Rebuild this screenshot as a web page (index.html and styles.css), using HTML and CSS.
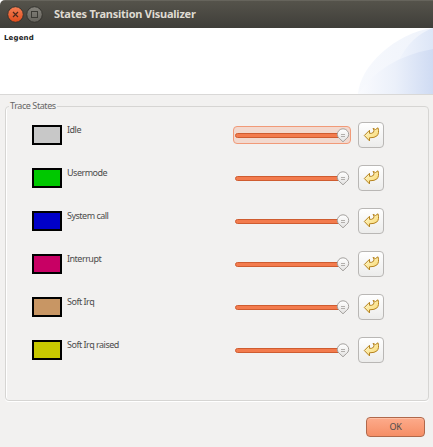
FILE: index.html
```html
<!DOCTYPE html>
<html lang="en">
<head>
<meta charset="utf-8">
<title>States Transition Visualizer</title>
<link rel="stylesheet" href="styles.css">
</head>
<body>
<svg width="0" height="0" class="defs" aria-hidden="true">
  <defs>
    <linearGradient id="gold" x1="0" y1="0" x2="1" y2="1"><stop offset="0" stop-color="#fffbd5"/><stop offset="1" stop-color="#f8d568"/></linearGradient>
    <linearGradient id="knob" x1="0" y1="0" x2="0" y2="1"><stop offset="0" stop-color="#fff"/><stop offset="1" stop-color="#e3e2e1"/></linearGradient>
    <symbol id="reset" viewBox="0 0 16 16"><path d="M1.3 8.5 6.5 3.3V6.3H8.5Q11.3 5.8 11 3.2L10 1.4 12.5 2.5 15 .8Q16.6 6.2 13.8 9Q11.8 10.8 6.5 10.8V13.9Z" fill="url(#gold)" stroke="#b58320" stroke-width="1"/></symbol>
    <symbol id="thumb" viewBox="0 0 14 15"><path d="M7 .8A5.7 5.7 0 0 1 12.7 6.5Q12.7 9.2 10.2 10.8L7 13.8 3.8 10.8Q1.3 9.2 1.3 6.5A5.7 5.7 0 0 1 7 .8Z" fill="url(#knob)" stroke="#a3a09d"/><path d="M5 6.5H9M5 8.5H9" stroke="#b2afac"/></symbol>
  </defs>
</svg>
<div class="window">
  <header class="titlebar">
    <svg class="controls" width="40" height="20" viewBox="0 0 40 20">
      <defs>
        <linearGradient id="close" x1="0" y1="0" x2="0" y2="1"><stop offset="0" stop-color="#f58055"/><stop offset="1" stop-color="#df4b1b"/></linearGradient>
        <linearGradient id="max" x1="0" y1="0" x2="0" y2="1"><stop offset="0" stop-color="#85837c"/><stop offset="1" stop-color="#64625c"/></linearGradient>
      </defs>
      <circle cx="10.5" cy="10.5" r="7.8" fill="url(#close)" stroke="#35342f"/>
      <path d="M8 8 13 13M13 8 8 13" stroke="#4c291c" stroke-width="1.2"/>
      <circle cx="29.5" cy="10.5" r="7.8" fill="url(#max)" stroke="#35342f"/>
      <rect x="26.5" y="7.5" width="6" height="6" fill="none" stroke="#3b3a35"/>
    </svg>
    <h1>States Transition Visualizer</h1>
  </header>
  <section class="banner">
    <h2>Legend</h2>
    <svg class="swoosh" width="76" height="66" viewBox="0 0 76 66">
      <defs>
        <linearGradient id="pale"><stop offset="0" stop-color="#f7f9fd"/><stop offset="1" stop-color="#eff3fb"/></linearGradient>
        <linearGradient id="edge"><stop offset="0" stop-color="#f0f4fc"/><stop offset="1" stop-color="#dde6f7"/></linearGradient>
        <linearGradient id="deep"><stop offset="0" stop-color="#fafbfe"/><stop offset=".5" stop-color="#ebf0fa"/><stop offset="1" stop-color="#cfdbf3"/></linearGradient>
      </defs>
      <path d="M1 66C3 38 38 5 76 0V66Z" fill="url(#pale)"/>
      <path d="M42 32Q54 8 76 0V32Z" fill="url(#edge)"/>
      <path d="M1 66Q26 30 76 21V66Z" fill="url(#deep)"/>
    </svg>
  </section>
  <main>
    <fieldset class="group">
      <legend>Trace States</legend>
      <div class="row"><span class="swatch idle"></span><span class="label">Idle</span><div class="slider focused"><div class="track"></div><svg class="thumb"><use href="#thumb"/></svg></div><button class="reset" aria-label="Reset"><svg><use href="#reset"/></svg></button></div>
      <div class="row"><span class="swatch user"></span><span class="label">Usermode</span><div class="slider"><div class="track"></div><svg class="thumb"><use href="#thumb"/></svg></div><button class="reset" aria-label="Reset"><svg><use href="#reset"/></svg></button></div>
      <div class="row"><span class="swatch syscall"></span><span class="label">System call</span><div class="slider"><div class="track"></div><svg class="thumb"><use href="#thumb"/></svg></div><button class="reset" aria-label="Reset"><svg><use href="#reset"/></svg></button></div>
      <div class="row"><span class="swatch interrupt"></span><span class="label">Interrupt</span><div class="slider"><div class="track"></div><svg class="thumb"><use href="#thumb"/></svg></div><button class="reset" aria-label="Reset"><svg><use href="#reset"/></svg></button></div>
      <div class="row"><span class="swatch softirq"></span><span class="label">Soft Irq</span><div class="slider"><div class="track"></div><svg class="thumb"><use href="#thumb"/></svg></div><button class="reset" aria-label="Reset"><svg><use href="#reset"/></svg></button></div>
      <div class="row"><span class="swatch raised"></span><span class="label">Soft Irq raised</span><div class="slider"><div class="track"></div><svg class="thumb"><use href="#thumb"/></svg></div><button class="reset" aria-label="Reset"><svg><use href="#reset"/></svg></button></div>
    </fieldset>
  </main>
  <footer><button class="ok">OK</button></footer>
</div>
</body>
</html>
```

FILE: styles.css
```css
* { box-sizing: border-box; }
body { margin: 0; background: #fff; font: 9px/12px "Noto Sans", "Open Sans", sans-serif; color: #4c4c4c; overflow: hidden; }
.defs { position: absolute; }
.window { width: 433px; height: 447px; display: flex; flex-direction: column; background: #f2f1f0; border-radius: 5px 0 0 0; overflow: hidden; }
.titlebar { height: 28px; flex: none; display: flex; align-items: center; gap: 9px; padding-left: 5px; background: linear-gradient(#55534b, #3f3e39); border-top: 1px solid #66645c; }
.controls { flex: none; margin-top: -1px; }
h1 { margin: -2px 0 0; font: bold 11px/16px "Noto Sans", "Open Sans", sans-serif; letter-spacing: -0.24px; color: #dfdbd2; white-space: nowrap; }
.banner { height: 67px; flex: none; display: flex; justify-content: space-between; background: #fff; border-bottom: 1px solid #d9d8d7; }
h2 { margin: 4px 0 0 4px; font: bold 7px/12px "DejaVu Sans", sans-serif; letter-spacing: 0.15px; color: #222; }
.swoosh { display: block; }
main { padding: 5px 4px 0 5px; }
.group { height: 301px; margin: 0 0 1px; padding: 10px 0 0 26px; min-width: 0; border: 1px solid #d6d5d3; border-radius: 4px; box-shadow: inset 1px 0 #fff, 0 1px #fff; }
.group legend { margin-left: -23px; padding: 0 1px; height: 12px; letter-spacing: -0.42px; color: #666; background: #f2f1f0; }
.row { height: 26px; margin-bottom: 17px; display: grid; grid-template-columns: 35px 166px 125px 26px; align-items: center; }
.swatch { width: 30px; height: 20px; border: 2px solid #000; }
.idle { background: #c8c8c8; }
.user { background: #00c800; }
.syscall { background: #0000c8; }
.interrupt { background: #c80064; }
.softirq { background: #c89664; }
.raised { background: #c8c800; }
.label { align-self: start; margin-top: 2px; letter-spacing: -0.5px; white-space: nowrap; }
.slider { position: relative; height: 18px; width: 118px; padding: 6px 1px; border: 1px solid transparent; border-radius: 4px; }
.focused { border-color: #f19a78; background: #f2d9cf; }
.track { height: 5px; width: 108px; border: 1px solid #cf5c30; border-radius: 3px; background: #f37b4d; }
.thumb { position: absolute; left: 102px; top: 1px; width: 14px; height: 15px; }
.reset { width: 26px; height: 26px; padding: 4px; border: 1px solid #b9b7b5; border-radius: 4px; background: linear-gradient(#fff, #ececeb); }
.reset svg { display: block; width: 16px; height: 16px; }
footer { display: flex; justify-content: flex-end; padding: 15px 8px 0 0; }
.ok { width: 59px; height: 20px; padding: 0; border: 1px solid #b0684b; border-radius: 4px; background: linear-gradient(#fdab8b, #f58e66); box-shadow: inset 0 1px #ffc0a5; font: inherit; line-height: 16px; letter-spacing: -0.4px; color: #4c4c4c; }
```
